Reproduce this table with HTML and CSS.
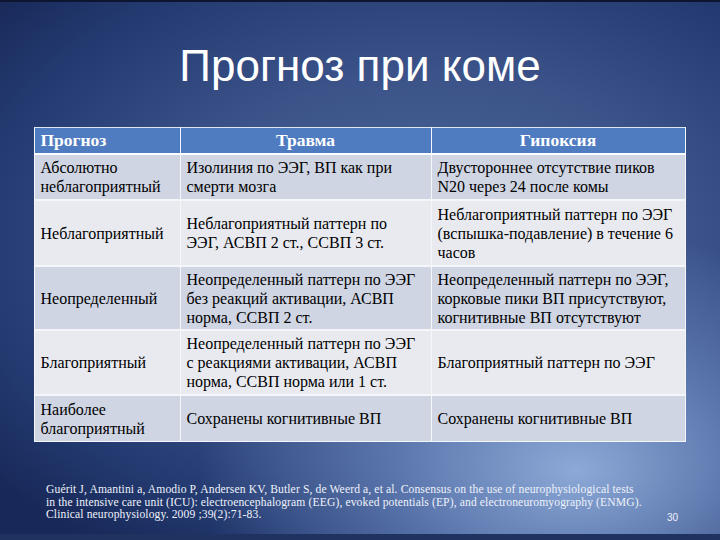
FILE: index.html
```html
<!DOCTYPE html>
<html lang="ru">
<head>
<meta charset="utf-8">
<link rel="stylesheet" href="styles.css">
</head>
<body>
<div class="slide">
  <h1 class="title">Прогноз при коме</h1>
  <table class="grid">
    <colgroup><col class="c1"><col class="c2"><col class="c3"></colgroup>
    <thead>
      <tr class="head"><th class="left">Прогноз</th><th>Травма</th><th>Гипоксия</th></tr>
    </thead>
    <tbody>
      <tr class="odd r1"><td>Абсолютно<br>неблагоприятный</td><td>Изолиния по ЭЭГ, ВП как при<br>смерти мозга</td><td>Двустороннее отсутствие пиков<br>N20 через 24 после комы</td></tr>
      <tr class="even r2"><td>Неблагоприятный</td><td>Неблагоприятный паттерн по<br>ЭЭГ, АСВП 2 ст., ССВП 3 ст.</td><td>Неблагоприятный паттерн по ЭЭГ<br>(вспышка-подавление) в течение 6<br>часов</td></tr>
      <tr class="odd r3"><td>Неопределенный</td><td>Неопределенный паттерн по ЭЭГ<br>без реакций активации, АСВП<br>норма, ССВП 2 ст.</td><td>Неопределенный паттерн по ЭЭГ,<br>корковые пики ВП присутствуют,<br>когнитивные ВП отсутствуют</td></tr>
      <tr class="even r4"><td>Благоприятный</td><td>Неопределенный паттерн по ЭЭГ<br>с реакциями активации, АСВП<br>норма, ССВП норма или 1 ст.</td><td>Благоприятный паттерн по ЭЭГ</td></tr>
      <tr class="odd r5"><td>Наиболее<br>благоприятный</td><td>Сохранены когнитивные ВП</td><td>Сохранены когнитивные ВП</td></tr>
    </tbody>
  </table>
  <div class="foot">
    <p class="cite">Guérit J, Amantini a, Amodio P, Andersen KV, Butler S, de Weerd a, et al. Consensus on the use of neurophysiological tests<br>in the intensive care unit (ICU): electroencephalogram (EEG), evoked potentials (EP), and electroneuromyography (ENMG).<br>Clinical neurophysiology. 2009 ;39(2):71-83.</p>
    <span class="num">30</span>
  </div>
</div>
</body>
</html>
```

FILE: styles.css
```css
html, body {
  margin: 0;
  padding: 0;
}
body {
  width: 720px;
  height: 540px;
  overflow: hidden;
}
.slide {
  width: 720px;
  height: 540px;
  box-sizing: border-box;
  border-top: 2px solid #0d1530;
  border-bottom: 6px solid #1f3260;
  background:
    radial-gradient(ellipse 70% 60% at 80% 88%, rgba(150,180,225,0.9) 0%, rgba(120,150,205,0.6) 35%, rgba(90,120,180,0) 75%),
    radial-gradient(ellipse 80% 70% at 60% 45%, #4f6a9a 0%, #3b5388 45%, #233a70 80%, #182858 100%);
  display: flex;
  flex-direction: column;
  align-items: center;
}
.title {
  margin: 36px 0 0 0;
  height: 89px;
  font-family: "Liberation Sans", Arial, sans-serif;
  font-weight: normal;
  font-size: 44px;
  line-height: 56px;
  color: #ffffff;
}
.grid {
  width: 651px;
  margin-left: -1px;
  border-collapse: collapse;
  table-layout: fixed;
  font-family: "Liberation Serif", "Times New Roman", serif;
  font-size: 16px;
  line-height: 19px;
  color: #000;
}
.c1 { width: 146px; }
.c2 { width: 251px; }
.c3 { width: 254px; }
.grid th, .grid td {
  padding: 0 6px;
  vertical-align: middle;
  text-align: left;
  border-left: 1px solid #f4f6fa;
  border-right: 1px solid #f4f6fa;
  white-space: nowrap;
}
.head th {
  background: #4f7cc0;
  color: #ffffff;
  font-family: "Liberation Serif", "Times New Roman", serif;
  font-weight: bold;
  font-size: 17.5px;
  text-align: center;
  height: 25px;
  border-bottom: 2px solid #ffffff;
  border-top: 1px solid #dfe6f2;
}
.head th.left { text-align: left; }
.grid td { border-bottom: 2px solid #f4f6fa; }
.odd td { background: #cfd5e3; }
.even td { background: #e8eaf0; }
.r1 td { height: 44px; }
.r2 td { height: 64px; }
.r3 td { height: 62px; }
.r4 td { height: 63px; }
.r5 td { height: 45px; border-bottom: 1px solid #f4f6fa; }
.foot {
  width: 632px;
  margin-top: 42px;
  margin-left: 4px;
  display: flex;
  align-items: flex-end;
  justify-content: space-between;
  color: #eef2fa;
}
.cite {
  margin: 0;
  font-family: "Liberation Serif", "Times New Roman", serif;
  font-size: 11.6px;
  line-height: 12.5px;
  letter-spacing: 0.12px;
}
.num {
  font-family: "Liberation Sans", Arial, sans-serif;
  font-size: 10px;
  line-height: 12px;
  margin-bottom: -2px;
}
```
